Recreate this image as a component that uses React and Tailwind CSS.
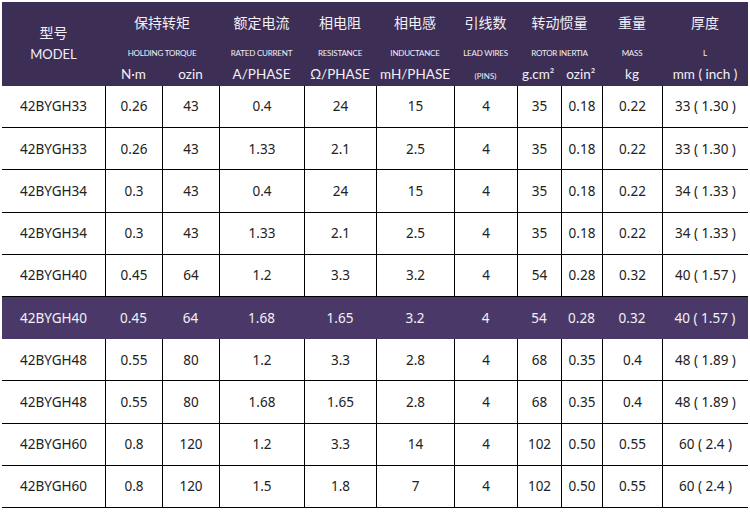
import React from 'react';

const cols = 'grid grid-cols-[103px_57px_57px_85px_72px_78px_63px_44px_41px_60px_86px]';

const rows = [
    ['42BYGH33', '0.26', '43', '0.4', '24', '15', '4', '35', '0.18', '0.22', '33 ( 1.30 )'],
    ['42BYGH33', '0.26', '43', '1.33', '2.1', '2.5', '4', '35', '0.18', '0.22', '33 ( 1.30 )'],
    ['42BYGH34', '0.3', '43', '0.4', '24', '15', '4', '35', '0.18', '0.22', '34 ( 1.33 )'],
    ['42BYGH34', '0.3', '43', '1.33', '2.1', '2.5', '4', '35', '0.18', '0.22', '34 ( 1.33 )'],
    ['42BYGH40', '0.45', '64', '1.2', '3.3', '3.2', '4', '54', '0.28', '0.32', '40 ( 1.57 )'],
    ['42BYGH40', '0.45', '64', '1.68', '1.65', '3.2', '4', '54', '0.28', '0.32', '40 ( 1.57 )'],
    ['42BYGH48', '0.55', '80', '1.2', '3.3', '2.8', '4', '68', '0.35', '0.4', '48 ( 1.89 )'],
    ['42BYGH48', '0.55', '80', '1.68', '1.65', '2.8', '4', '68', '0.35', '0.4', '48 ( 1.89 )'],
    ['42BYGH60', '0.8', '120', '1.2', '3.3', '14', '4', '102', '0.50', '0.55', '60 ( 2.4 )'],
    ['42BYGH60', '0.8', '120', '1.5', '1.8', '7', '4', '102', '0.50', '0.55', '60 ( 2.4 )'],
];

// groups: [title, subtitle, units[], span]
const groups = [
    ['保持转矩', 'HOLDING TORQUE', ['N·m', 'ozin'], 'col-span-2'],
    ['额定电流', 'RATED CURRENT', ['A/PHASE'], 'col-span-1'],
    ['相电阻', 'RESISTANCE', ['Ω/PHASE'], 'col-span-1'],
    ['相电感', 'INDUCTANCE', ['mH/PHASE'], 'col-span-1'],
    ['引线数', 'LEAD WIRES', ['(PINS)'], 'col-span-1'],
    ['转动惯量', 'ROTOR INERTIA', ['g.cm²', 'ozin²'], 'col-span-2'],
    ['重量', 'MASS', ['kg'], 'col-span-1'],
    ['厚度', 'L', ['mm ( inch )'], 'col-span-1'],
];

const Header = () => (
    <div className={`${cols} bg-[#3d2e55] text-[#f2f0f6] h-[84px]`}>
        <div className="flex flex-col items-center">
            <div className="h-[42px] flex items-end pb-[1px] text-[14px] font-['Noto_Sans_CJK_SC',sans-serif]">型号</div>
            <div className="h-[22px] flex items-center text-[13px] font-['Lato',sans-serif]">MODEL</div>
        </div>
        {groups.map(([title, sub, units, span]) => (
            <div key={title} className={`${span} flex flex-col`}>
                <div className="h-[40px] flex items-center justify-center text-[14px] font-['Noto_Sans_CJK_SC',sans-serif]">{title}</div>
                <div className="h-[21px] flex items-center justify-center text-[8px] tracking-tight font-['Lato',sans-serif]">{sub}</div>
                <div className="h-[23px] flex">
                    {units.map((u) => (
                        <div
                            key={u}
                            className={`flex-1 flex items-center justify-center font-['Lato',sans-serif] ${u === '(PINS)' ? 'text-[8px] pt-[2px]' : 'text-[13.5px]'}`}
                        >
                            {u}
                        </div>
                    ))}
                </div>
            </div>
        ))}
    </div>
);

const App = () => {
    return (
        <div className="w-[750px] h-[512px] bg-white pt-[2px] pl-[2px]">
            <div className="w-[746px]">
                <Header />
                {rows.map((r, i) => {
                    const hl = i === 5;
                    return (
                        <div
                            key={i}
                            className={`${cols} h-[42.2px] ${hl ? 'bg-[#4a3968] text-[#f2f0f6]' : 'bg-white text-[#222] border-b border-black'} ${i === 4 ? 'border-b border-black' : ''}`}
                        >
                            {r.map((v, j) => (
                                <div
                                    key={j}
                                    className={`flex items-center justify-center text-[13.5px] font-['Noto_Sans',sans-serif] ${j > 0 && !hl ? 'border-l border-black' : ''}`}
                                >
                                    {v}
                                </div>
                            ))}
                        </div>
                    );
                })}
            </div>
        </div>
    );
};

export default App;
